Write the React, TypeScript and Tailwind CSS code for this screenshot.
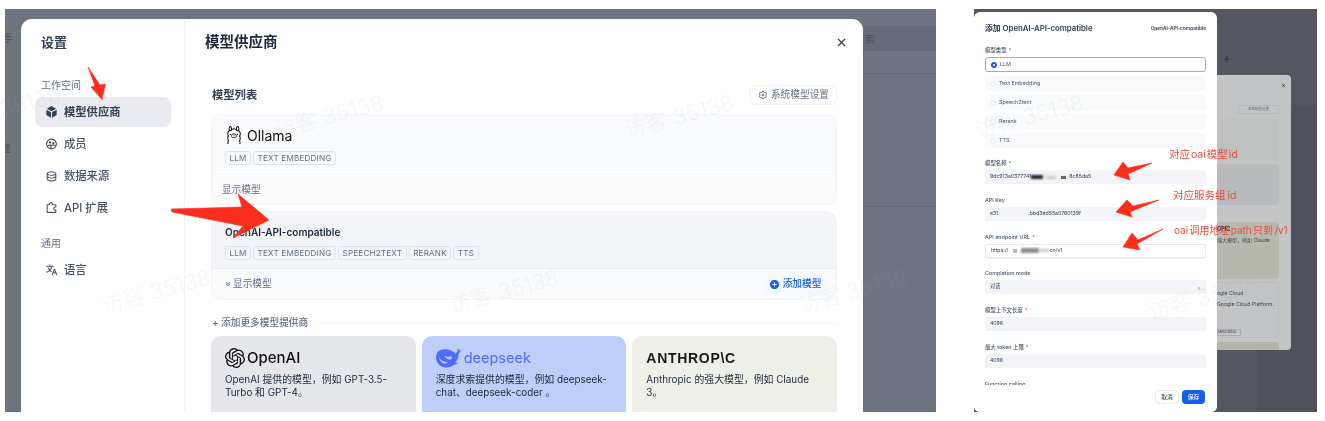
import React from 'react';
import {
  RiBox3Fill,
  RiGroup2Line,
  RiDatabase2Line,
  RiPuzzle2Line,
  RiTranslate2,
  RiCloseLine,
  RiSettings3Line,
  RiAddCircleFill,
  RiArrowDownDoubleLine,
} from 'react-icons/ri';
import { SiOpenai, SiOllama } from 'react-icons/si';

const Tag = ({ t }: { t: string }) => (
  <span className="flex h-[14px] items-center rounded-[3px] border border-[#dfe2e8] px-[3.5px] text-[8.1px] tracking-[0.2px] text-[#667085]">
    {t}
  </span>
);

const NavItem = ({ icon, label, active }: { icon: React.ReactNode; label: string; active?: boolean }) => (
  <div
    className={`flex h-[30px] items-center gap-[6px] rounded-[7px] pl-[10px] text-[11.3px] ${
      active ? 'bg-[#e9ebf0] font-semibold text-[#344054]' : 'font-medium text-[#475467]'
    }`}
  >
    <span className="flex w-[13px] justify-center text-[14px]">{icon}</span>
    {label}
  </div>
);

const Watermark = ({ className }: { className: string }) => (
  <span className={`pointer-events-none absolute -rotate-[15deg] whitespace-nowrap text-[22px] font-light text-[#9ca3af]/10 ${className}`}>
    访客 35138
  </span>
);

const Field = ({ label, req, children, white }: { label: string; req?: boolean; children: React.ReactNode; white?: boolean }) => (
  <div className="flex flex-col">
    <div className="flex h-[10px] items-center text-[5.4px] font-medium text-[#475467]">
      {label}
      {req && <span className="ml-[2px] text-[#f04438]">*</span>}
    </div>
    <div
      className={`mt-[2px] flex h-[14px] items-center rounded-[2.5px] px-[5px] text-[5.2px] text-[#344054] ${
        white ? 'border border-[#e6e8ec] bg-white shadow-[0_1px_1px_rgba(0,0,0,0.05)]' : 'bg-[#f2f4f7]'
      }`}
    >
      {children}
    </div>
  </div>
);

const Radio = ({ label, on }: { label: string; on?: boolean }) => (
  <div
    className={`flex h-[15px] items-center gap-[3px] rounded-[3px] pl-[5px] text-[5.4px] text-[#475467] ${
      on ? 'border border-[#84adff] bg-white' : 'bg-[#f9fafb]'
    }`}
  >
    {on ? (
      <span className="size-[6px] rounded-full border-[2px] border-[#155eef] bg-white" />
    ) : (
      <span className="size-[6px] rounded-full border border-[#eaecf0] bg-[#f9fafb]" />
    )}
    {label}
  </div>
);

const Arrow = ({ points }: { points: string }) => (
  <polygon points={points} fill="#fb2d1c" stroke="#fb2d1c" strokeWidth="0.6" strokeLinejoin="round" />
);

export default function App() {
  return (
    <div className="relative flex h-[421px] w-[1325px] items-start overflow-hidden bg-white blur-[0.3px] [font-family:Inter,'Noto_Sans_CJK_SC',sans-serif]">
      {/* left screenshot */}
      <section className="relative ml-[5px] mt-[9px] h-[403px] w-[931px] overflow-hidden bg-[#6f7580] pl-[16px] pt-[10px]">
        <span className="absolute left-[-2px] top-[22px] text-[10px] text-[#4b505a]">手</span>
        <span className="absolute left-[-4px] top-[132px] text-[10px] text-[#4b505a]">建</span>
        <span className="absolute right-[0] top-[17px] h-[25px] w-[73px] bg-[#666c77] pl-[2px] pt-[6px] text-[10px] text-[#4b505a]">索</span>
        <div className="absolute right-0 top-[64px] h-px w-[73px] bg-[#666c77]" />
        <div className="absolute right-0 top-[197px] h-px w-[73px] bg-[#666c77]" />
        <div className="flex h-[393px] w-[842px] overflow-hidden rounded-t-[11px] bg-white">
          {/* sidebar */}
          <aside className="w-[164px] shrink-0 border-r border-[#f2f4f7] pl-[14px] pr-[13px] pt-[14px]">
            <h2 className="pl-[6px] text-[13px] font-semibold leading-[18px] text-[#344054]">设置</h2>
            <div className="mt-[27px] pl-[6px] text-[10px] leading-[14px] text-[#667085]">工作空间</div>
            <div className="mt-[5px] flex flex-col gap-[2px]">
              <NavItem active icon={<RiBox3Fill />} label="模型供应商" />
              <NavItem icon={<RiGroup2Line />} label="成员" />
              <NavItem icon={<RiDatabase2Line />} label="数据来源" />
              <NavItem icon={<RiPuzzle2Line />} label="API 扩展" />
            </div>
            <div className="mt-[13px] pl-[6px] text-[10px] leading-[14px] text-[#667085]">通用</div>
            <div className="mt-[5px]">
              <NavItem icon={<RiTranslate2 />} label="语言" />
            </div>
          </aside>
          {/* main */}
          <main className="min-w-0 flex-1 pl-[26px] pr-[26px]">
            <div className="-ml-[6px] flex h-[46px] items-center justify-between">
              <h1 className="text-[14.5px] font-semibold text-[#1d2939]">模型供应商</h1>
              <RiCloseLine className="mr-[-12px] text-[15px] text-[#344054]" />
            </div>
            <div className="mt-[20px] flex h-[20px] items-center justify-between">
              <span className="pl-px text-[11.3px] font-semibold text-[#344054]">模型列表</span>
              <span className="flex h-[20px] w-[87px] items-center justify-center gap-[3px] rounded-[5px] border border-[#f0f1f4] text-[9.7px] text-[#667085]">
                <RiSettings3Line className="text-[10px]" />
                系统模型设置
              </span>
            </div>
            {/* ollama */}
            <div className="mt-[9px] h-[91px] overflow-hidden rounded-[10px] border border-[#f2f4f7] bg-[#fcfcfd]">
              <div className="h-[60px] border-b border-[#f2f4f7] bg-[#f9fafb] pl-[13px] pt-[10px]">
                <div className="flex h-[20px] items-center gap-[4px]">
                  <SiOllama className="text-[18px] text-[#111]" />
                  <span className="text-[14px] font-normal text-[#111]">Ollama</span>
                </div>
                <div className="mt-[6px] flex gap-[2px]">
                  <Tag t="LLM" />
                  <Tag t="TEXT EMBEDDING" />
                </div>
              </div>
              <div className="flex h-[30px] items-center pl-[10px] text-[9.7px] text-[#667085]">显示模型</div>
            </div>
            {/* oai */}
            <div className="mt-[6px] h-[89px] overflow-hidden rounded-[10px] border border-[#f2f4f7] bg-[#f9fafb]">
              <div className="h-[57px] border-b border-[#eaecf0] bg-[#f2f4f7] pl-[13px] pt-[13px]">
                <div className="h-[14px] text-[10px] font-semibold leading-[14px] text-[#1d2939]">OpenAI-API-compatible</div>
                <div className="mt-[7px] flex gap-[2px]">
                  <Tag t="LLM" />
                  <Tag t="TEXT EMBEDDING" />
                  <Tag t="SPEECH2TEXT" />
                  <Tag t="RERANK" />
                  <Tag t="TTS" />
                </div>
              </div>
              <div className="flex h-[31px] items-center justify-between pl-[12px] pr-[10px]">
                <span className="flex items-center gap-[1px] text-[9.7px] text-[#667085]">
                  <RiArrowDownDoubleLine className="text-[8px]" />
                  显示模型
                </span>
                <span className="flex h-[20px] w-[62px] items-center justify-center gap-[3px] rounded-[5px] bg-[#f5f8ff] text-[9.7px] font-medium text-[#155eef]">
                  <RiAddCircleFill className="text-[11px]" />
                  添加模型
                </span>
              </div>
            </div>
            {/* add more */}
            <div className="mt-[15px] flex h-[16px] items-center gap-[9px]">
              <span className="whitespace-nowrap pl-px text-[9.7px] font-medium text-[#667085]">+ 添加更多模型提供商</span>
              <span className="h-px flex-1 bg-[#f2f4f7]" />
            </div>
            <div className="mt-[5px] grid grid-cols-3 gap-[6px]">
              <div className="h-[90px] rounded-[10px] bg-[#e4e6ea] pl-[14px] pr-[10px] pt-[12px] text-[#1d2939]">
                <div className="flex h-[20px] items-center gap-[2px]">
                  <SiOpenai className="text-[20px] text-[#111]" />
                  <span className="text-[15px] font-medium text-[#111]">OpenAI</span>
                </div>
                <p className="mt-[5px] text-[9.9px] leading-[13px]">OpenAI 提供的模型，例如 GPT-3.5-Turbo 和 GPT-4。</p>
              </div>
              <div className="h-[90px] rounded-[10px] bg-[#bfcdfb] pl-[14px] pr-[10px] pt-[12px] text-[#1d2939]">
                <div className="flex h-[20px] items-center gap-[2px]">
                  <svg viewBox="0 0 26 20" className="h-[20px] w-[26px]" fill="#4d6bfe">
                    <path d="M25.5 1.8c-.4-.2-1.2.3-1.9.9-.5-1-1.4-2.1-2.3-2.4.2 1 .3 2 .5 3-1.1.7-1.4 1.7-2 2.6C17.7 3.4 14.8 2 12 1.5 8.800 1 6.600 1.300 5.200 1.700 2 2.700 0 5.600 0 9.300 0 14.800 4.500 19.500 10.300 19.500c2.500 0 5.500-.8 7.700-2.700 1.800-.2 3.400-1 4.200-2.200-1.200.3-2.300.3-3.300.1 2.300-2.300 3.500-5.400 3.800-8.800.7-1.300 1.800-2.700 2.800-4.100zM8.600 15.800C5.800 15 3.300 12.400 3.200 9.400c1.800 3.200 5.300 4.900 8.800 4.600-1.200 1-2.300 1.600-3.400 1.800zM14.800 11.400c-2.400.4-5-1-6.800-3.600 2.200 1 5.200 1.300 7.400.3.900 1 .6 2.900-.6 3.300z" />
                  </svg>
                  <span className="text-[14.5px] font-normal text-[#4d6bfe]">deepseek</span>
                </div>
                <p className="mt-[5px] text-[9.9px] leading-[13px]">深度求索提供的模型，例如 deepseek-chat、deepseek-coder 。</p>
              </div>
              <div className="h-[90px] rounded-[10px] bg-[#eeefe9] pl-[14px] pr-[18px] pt-[12px] text-[#1d2939]">
                <div className="flex h-[20px] items-center text-[14px] font-bold tracking-[0.7px] text-[#191919] [font-family:'Liberation_Sans',sans-serif]">
                  ANTHROP\C
                </div>
                <p className="mt-[5px] text-[9.9px] leading-[13px]">Anthropic 的强大模型，例如 Claude 3。</p>
              </div>
            </div>
          </main>
        </div>
      </section>

      {/* right screenshot */}
      <section className="relative ml-[38px] mt-[9px] flex h-[403px] w-[343px] items-start overflow-hidden bg-[#54575f] pt-[3px]">
        <div className="absolute bottom-0 right-0 top-[96px] w-[60px] bg-[#4f525a]" />
        <div className="relative h-[400px] w-[243px] shrink-0 overflow-hidden rounded-[6px] bg-white px-[11px]">
          <div className="flex h-[33px] items-center justify-between">
            <span className="text-[7.8px] font-semibold text-[#344054]">添加 OpenAI-API-compatible</span>
            <span className="text-[4.8px] font-semibold text-[#344054]">OpenAI-API-compatible</span>
          </div>
          <div className="flex h-[10px] items-center text-[5.4px] font-medium text-[#475467]">
            模型类型<span className="ml-[2px] text-[#f04438]">*</span>
          </div>
          <div className="mt-[2px] flex flex-col gap-[4px]">
            <Radio on label="LLM" />
            <Radio label="Text Embedding" />
            <Radio label="Speech2text" />
            <Radio label="Rerank" />
            <Radio label="TTS" />
          </div>
          <div className="mt-[10px] flex flex-col gap-[10.8px]">
            <Field label="模型名称" req>
              9dc913a0377741
              <span className="h-[4px] w-[12px] bg-[#222] blur-[1px]" />
              <span className="ml-[3px] h-[3px] w-[10px] bg-[#ccc] blur-[1px]" />
              <span className="ml-[5px] h-[3px] w-[5px] bg-[#666] blur-[0.5px]" />
              <span className="ml-[3px]">8c85da5</span>
            </Field>
            <Field label="API Key">
              e31
              <span className="ml-[30px]">.bbd3ed55a0760139f</span>
            </Field>
            <Field label="API endpoint URL" req white>
              https://
              <span className="ml-[5px] h-[4px] w-[4px] bg-[#bbb] blur-[0.6px]" />
              <span className="ml-[4px] h-[5px] w-[18px] bg-[#8c8c8c] blur-[1px]" />
              <span className="h-[3px] w-[10px] bg-[#ccc] blur-[1px]" />
              cn/v1
            </Field>
            <Field label="Completion mode">
              <span className="flex-1">对话</span>
              <span className="text-[6px] text-[#98a2b3]">×</span>
            </Field>
            <Field label="模型上下文长度" req>4096</Field>
            <Field label="最大 token 上限" req>4096</Field>
            <div className="text-[5.4px] font-medium leading-[10px] text-[#475467]">Function calling</div>
          </div>
          <div className="absolute bottom-0 left-0 right-0 flex h-[27px] items-start justify-end gap-[3px] bg-white pr-[12px] pt-[5px]">
            <span className="flex h-[14px] w-[24px] items-center justify-center rounded-[4px] border border-[#e6e8ec] bg-white text-[5.8px] font-medium text-[#475467]">取消</span>
            <span className="flex h-[14px] w-[23px] items-center justify-center rounded-[4px] bg-[#155eef] text-[5.8px] font-medium text-white">保存</span>
          </div>
        </div>
        {/* page beneath the dialog */}
        <div className="relative mt-[63px] flex h-[275px] w-[74px] shrink-0 flex-col overflow-hidden rounded-r-[4px] bg-[#c3c4c5] pr-[12px] text-[#3f4146]">
          <div className="flex h-[20px] items-center justify-end">
            <RiCloseLine className="-mr-[8px] text-[7px] text-[#444]" />
          </div>
          <div className="ml-[21px] mt-[10px] flex h-[9px] items-center justify-center whitespace-nowrap rounded-[2px] border border-[#b7b8b9] text-[3.5px] text-[#66686c]">
            系统模型设置
          </div>
          <div className="mt-[5px] h-[42px] shrink-0 rounded-r-[4px] bg-[#bfc0c0]" />
          <div className="mt-[3px] h-[41px] shrink-0 rounded-r-[4px] bg-[#b9babb]" />
          <div className="mt-[17px] h-[57px] shrink-0 rounded-r-[4px] bg-[#b8b9ae] pt-[3px] text-[5px]">
            <div className="text-[5.5px] font-semibold text-[#222]">OPIC</div>
            <div className="mt-[4px] whitespace-nowrap">强大模型，例如 Claude</div>
          </div>
          <div className="mt-[3px] h-[56px] shrink-0 whitespace-nowrap rounded-r-[4px] border border-l-0 border-[#bbbcbd] pt-[7px] text-[5.2px]">
            ogle Cloud
            <div className="mt-[3px]">Google Cloud Platform.</div>
            <div className="mt-[20px] w-[24px] rounded-[1px] border border-[#aaabac] text-[3.4px]">MBEDDING</div>
          </div>
          <div className="mt-[4px] h-[8px] shrink-0 rounded-tr-[4px] bg-[#b5b2a8]" />
        </div>
        <span className="absolute left-[250px] top-[46px] text-[5.5px] text-[#2c2e33]">手</span>
      </section>

      {/* watermarks */}
      <Watermark className="left-[-50px] top-[92px]" />
      <Watermark className="left-[273px] top-[100px]" />
      <Watermark className="left-[623px] top-[100px]" />
      <Watermark className="left-[100px] top-[275px]" />
      <Watermark className="left-[448px] top-[275px]" />
      <Watermark className="left-[797px] top-[275px]" />
      <Watermark className="left-[973px] top-[100px]" />
      <Watermark className="left-[1147px] top-[281px]" />

      {/* annotation arrows */}
      <svg className="pointer-events-none absolute inset-0" width="1325" height="421" viewBox="0 0 1325 421">
        <Arrow points="88,67 100,85 105.500,84 102,99.500 91,87 95,86" />
        <Arrow points="171,209 242,207 238,194 269,220 233,238 243,226 172,212" />
        <Arrow points="1152,163 1128,168 1123,162 1114,175 1130,180 1128,174" />
        <Arrow points="1159,200 1133,206 1127,200 1116,212 1132,217 1130,212" />
        <Arrow points="1163,229 1138,240 1132,233 1123,247 1140,250 1137,244" />
      </svg>
      <span className="absolute left-[1169px] top-[148px] text-[10.5px] leading-[14px] text-[#ee4b40] [word-spacing:-2px]">对应 oai 模型 id</span>
      <span className="absolute left-[1173px] top-[189px] text-[10.5px] leading-[14px] text-[#ee4b40] [word-spacing:-1px]">对应服务组 id</span>
      <span className="absolute left-[1174px] top-[223px] whitespace-nowrap text-[10px] leading-[14px] text-[#ee4b40] [word-spacing:-1.5px]">oai 调用地址 path 只到 /v1</span>
    </div>
  );
}
